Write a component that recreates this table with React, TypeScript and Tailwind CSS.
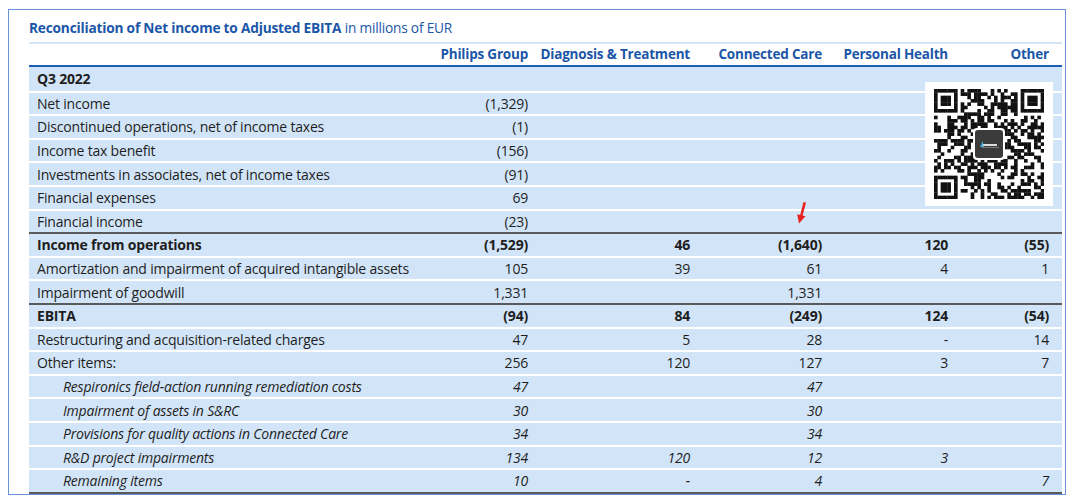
import React from 'react';

type Row = {
  label: string;
  values: string[];
  kind?: 'bold' | 'italic' | 'normal' | 'section';
  ruleAbove?: boolean;
};

const rows: Row[] = [
  { label: 'Q3 2022', values: ['', '', '', '', ''], kind: 'section' },
  { label: 'Net income', values: ['(1,329)', '', '', '', ''] },
  { label: 'Discontinued operations, net of income taxes', values: ['(1)', '', '', '', ''] },
  { label: 'Income tax benefit', values: ['(156)', '', '', '', ''] },
  { label: 'Investments in associates, net of income taxes', values: ['(91)', '', '', '', ''] },
  { label: 'Financial expenses', values: ['69', '', '', '', ''] },
  { label: 'Financial income', values: ['(23)', '', '', '', ''] },
  { label: 'Income from operations', values: ['(1,529)', '46', '(1,640)', '120', '(55)'], kind: 'bold', ruleAbove: true },
  { label: 'Amortization and impairment of acquired intangible assets', values: ['105', '39', '61', '4', '1'] },
  { label: 'Impairment of goodwill', values: ['1,331', '', '1,331', '', ''] },
  { label: 'EBITA', values: ['(94)', '84', '(249)', '124', '(54)'], kind: 'bold', ruleAbove: true },
  { label: 'Restructuring and acquisition-related charges', values: ['47', '5', '28', '-', '14'] },
  { label: 'Other items:', values: ['256', '120', '127', '3', '7'] },
  { label: 'Respironics field-action running remediation costs', values: ['47', '', '47', '', ''], kind: 'italic' },
  { label: 'Impairment of assets in S&RC', values: ['30', '', '30', '', ''], kind: 'italic' },
  { label: 'Provisions for quality actions in Connected Care', values: ['34', '', '34', '', ''], kind: 'italic' },
  { label: 'R&D project impairments', values: ['134', '120', '12', '3', ''], kind: 'italic' },
  { label: 'Remaining items', values: ['10', '-', '4', '', '7'], kind: 'italic' },
];

const headers = ['Philips Group', 'Diagnosis & Treatment', 'Connected Care', 'Personal Health', 'Other'];

const gridCols = 'grid grid-cols-[411px_92px_162px_132px_126px_109px]';

function qrMatrix(n: number) {
  let seed = 11;
  const rnd = () => {
    seed = (seed * 9301 + 49297) % 233280;
    return seed / 233280;
  };
  const m: boolean[][] = [];
  for (let y = 0; y < n; y++) {
    m.push([]);
    for (let x = 0; x < n; x++) m[y].push(rnd() > 0.5);
  }
  const finder = (ox: number, oy: number) => {
    for (let y = -1; y < 8; y++)
      for (let x = -1; x < 8; x++) {
        const yy = oy + y;
        const xx = ox + x;
        if (yy < 0 || xx < 0 || yy >= n || xx >= n) continue;
        const edge = x === 0 || x === 6 || y === 0 || y === 6;
        const core = x >= 2 && x <= 4 && y >= 2 && y <= 4;
        m[yy][xx] = x >= 0 && x <= 6 && y >= 0 && y <= 6 && (edge || core);
      }
  };
  finder(0, 0);
  finder(n - 7, 0);
  finder(0, n - 7);
  return m;
}

function QrCode() {
  const n = 33;
  const m = qrMatrix(n);
  const cell = 110 / n;
  return (
    <svg width="110" height="110" viewBox="0 0 110 110">
      {m.flatMap((r, y) =>
        r.map((on, x) =>
          on ? (
            <rect key={`${x}-${y}`} x={x * cell} y={y * cell} width={cell + 0.3} height={cell + 0.3} fill="#111" />
          ) : null
        )
      )}
      <rect x="39" y="39" width="32" height="32" rx="4" fill="#fff" />
      <rect x="41" y="41" width="28" height="28" rx="3" fill="#3b3b3b" />
      <path d="M46 58 L48.5 52 L50 58 Z" fill="#3fa7d6" />
      <rect x="49" y="55" width="14" height="2" fill="#dcdcdc" />
      <rect x="48" y="58" width="17" height="0.8" fill="#8a8a8a" />
    </svg>
  );
}

export default function App() {
  return (
    <div className="w-[1080px] h-[502px] bg-white pt-[9px] pl-[8px] font-['Open_Sans',sans-serif]">
      <div className="relative w-[1058px] h-[486px] border-[1.5px] border-[#6a93d8] pl-[20px] pr-[3px] pt-[7px]">
        <div className="h-[22px] text-[13.7px] leading-[22px] text-[#1b56a8] tracking-[-0.2px]">
          <span className="font-bold">Reconciliation of Net income to Adjusted EBITA</span>
          <span> in millions of EUR</span>
        </div>
        <div className="mt-[3px] h-[2px] bg-[#d5e4f4]" />
        <div className={`${gridCols} h-[21px] items-center text-[13.5px] font-bold text-[#1b56a8] tracking-[-0.2px]`}>
          <div />
          {headers.map((h, i) => (
            <div key={h} className={`text-right whitespace-nowrap ${i === 4 ? 'pr-3' : 'pr-1'}`}>
              {h}
            </div>
          ))}
        </div>
        <div className="h-[2px] bg-[#1f5db4]" />
        <div>
          {rows.map((row, idx) => (
            <div
              key={row.label}
              className={`${gridCols} h-[23.6px] items-center bg-[#d2e5f8] text-[14px] text-[#1e1e1e] tracking-[-0.2px] ${
                idx === 0 ? '' : row.ruleAbove ? 'border-t-2 border-[#5a5a5a]' : 'border-t-2 border-white'
              } ${row.kind === 'bold' || row.kind === 'section' ? 'font-bold' : ''} ${row.kind === 'italic' ? 'italic' : ''}`}
            >
              <div className={`whitespace-nowrap ${row.kind === 'italic' ? 'pl-[34px]' : 'pl-[8px]'}`}>{row.label}</div>
              {row.values.map((v, i) => (
                <div key={i} className={`text-right ${i === 4 ? 'pr-3' : 'pr-1'}`}>
                  {v}
                </div>
              ))}
            </div>
          ))}
          <div className="h-[2px] bg-[#5a5a5a]" />
        </div>

        <div className="absolute left-[916px] top-[72px] w-[128px] h-[124px] bg-white flex items-center justify-center">
          <QrCode />
        </div>

        <svg className="absolute left-[785px] top-[192px]" width="14" height="22" viewBox="0 0 14 22">
          <path d="M9.5 0 L12 0.8 L8.6 13.5 L11.5 14.3 L5 21.5 L3.2 12.2 L6.2 12.9 Z" fill="#e8231f" />
        </svg>
      </div>
    </div>
  );
}
